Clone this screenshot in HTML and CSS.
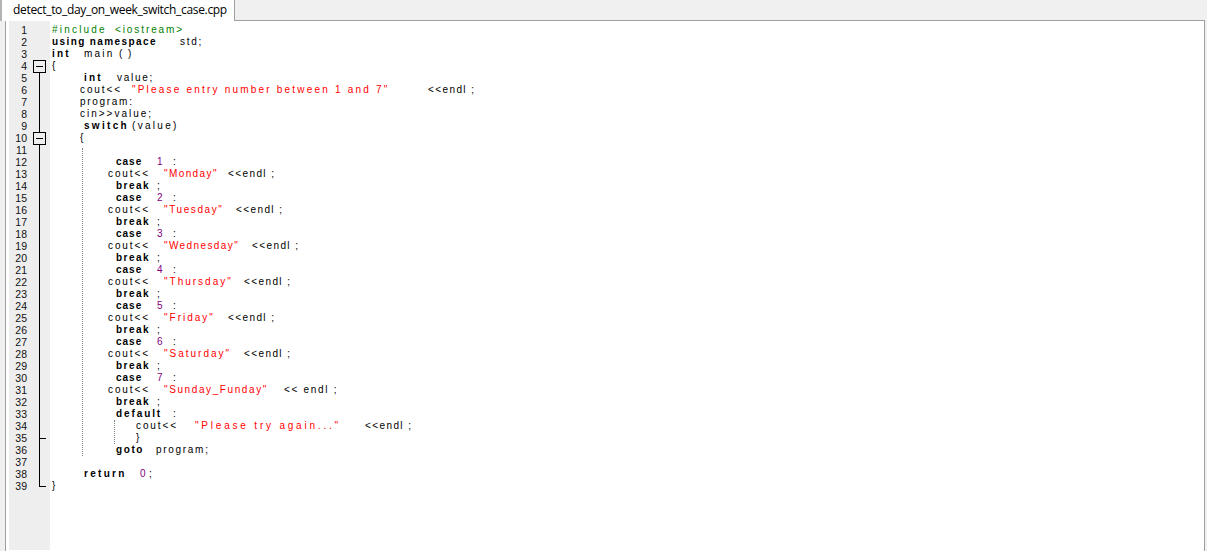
FILE: index.html
```html
<!DOCTYPE html>
<html lang="en">
<head>
<meta charset="utf-8">
<title>detect_to_day_on_week_switch_case.cpp</title>
<link rel="stylesheet" href="styles.css">
</head>
<body>
<div class="tabbar"><div class="tab">detect_to_day_on_week_switch_case.cpp</div></div>
<div class="editor">
<div class="gutter">
<div class="row"><span class="num">1</span><span class="fold"></span></div>
<div class="row"><span class="num">2</span><span class="fold"></span></div>
<div class="row"><span class="num">3</span><span class="fold"></span></div>
<div class="row"><span class="num">4</span><span class="fold box first"></span></div>
<div class="row"><span class="num">5</span><span class="fold line"></span></div>
<div class="row"><span class="num">6</span><span class="fold line"></span></div>
<div class="row"><span class="num">7</span><span class="fold line"></span></div>
<div class="row"><span class="num">8</span><span class="fold line"></span></div>
<div class="row"><span class="num">9</span><span class="fold line"></span></div>
<div class="row"><span class="num">10</span><span class="fold box"></span></div>
<div class="row"><span class="num">11</span><span class="fold line"></span></div>
<div class="row"><span class="num">12</span><span class="fold line"></span></div>
<div class="row"><span class="num">13</span><span class="fold line"></span></div>
<div class="row"><span class="num">14</span><span class="fold line"></span></div>
<div class="row"><span class="num">15</span><span class="fold line"></span></div>
<div class="row"><span class="num">16</span><span class="fold line"></span></div>
<div class="row"><span class="num">17</span><span class="fold line"></span></div>
<div class="row"><span class="num">18</span><span class="fold line"></span></div>
<div class="row"><span class="num">19</span><span class="fold line"></span></div>
<div class="row"><span class="num">20</span><span class="fold line"></span></div>
<div class="row"><span class="num">21</span><span class="fold line"></span></div>
<div class="row"><span class="num">22</span><span class="fold line"></span></div>
<div class="row"><span class="num">23</span><span class="fold line"></span></div>
<div class="row"><span class="num">24</span><span class="fold line"></span></div>
<div class="row"><span class="num">25</span><span class="fold line"></span></div>
<div class="row"><span class="num">26</span><span class="fold line"></span></div>
<div class="row"><span class="num">27</span><span class="fold line"></span></div>
<div class="row"><span class="num">28</span><span class="fold line"></span></div>
<div class="row"><span class="num">29</span><span class="fold line"></span></div>
<div class="row"><span class="num">30</span><span class="fold line"></span></div>
<div class="row"><span class="num">31</span><span class="fold line"></span></div>
<div class="row"><span class="num">32</span><span class="fold line"></span></div>
<div class="row"><span class="num">33</span><span class="fold line"></span></div>
<div class="row"><span class="num">34</span><span class="fold line"></span></div>
<div class="row"><span class="num">35</span><span class="fold line tick"></span></div>
<div class="row"><span class="num">36</span><span class="fold line"></span></div>
<div class="row"><span class="num">37</span><span class="fold line"></span></div>
<div class="row"><span class="num">38</span><span class="fold line"></span></div>
<div class="row"><span class="num">39</span><span class="fold end"></span></div>
</div>
<div class="code">
<div class="guide guide-outer"></div>
<div class="guide guide-inner"></div>
<div class="ln pre"><span class="t w63 ls22">#include </span><span>&lt;iostream&gt;</span></div>
<div class="ln"><b class="t w128 ls14">using namespace </b><span class="ls17">std;</span></div>
<div class="ln"><b class="t w32 ls22">int </b><span class="t w35 ls22">main </span><span class="t w9">(</span>)</div>
<div class="ln">{</div>
<div class="ln in-b"><b class="t w33 ls22">int </b><span class="ls17">value;</span></div>
<div class="ln in-a"><span class="t w52">cout&lt;&lt; </span><span class="t w296 str ls22">"Please entry number between 1 and 7" </span><span class="ls14">&lt;&lt;endl ;</span></div>
<div class="ln in-a ls17">program:</div>
<div class="ln in-a ls20">cin&gt;&gt;value;</div>
<div class="ln in-b"><b class="t w48 ls23">switch </b><span class="ls23">(value)</span></div>
<div class="ln in-a">{</div>
<div class="ln"></div>
<div class="ln in-k"><b class="t w41 ls10">case </b><span class="t w16 n">1 </span>:</div>
<div class="ln in-c"><span class="t w56">cout&lt;&lt; </span><span class="t w64 str ls14">"Monday" </span><span class="ls14">&lt;&lt;endl ;</span></div>
<div class="ln in-k"><b class="t w41 ls15">break </b>;</div>
<div class="ln in-k"><b class="t w41 ls10">case </b><span class="t w16 n">2 </span>:</div>
<div class="ln in-c"><span class="t w56">cout&lt;&lt; </span><span class="t w72 str ls16">"Tuesday" </span><span class="ls14">&lt;&lt;endl ;</span></div>
<div class="ln in-k"><b class="t w41 ls15">break </b>;</div>
<div class="ln in-k"><b class="t w41 ls10">case </b><span class="t w16 n">3 </span>:</div>
<div class="ln in-c"><span class="t w56">cout&lt;&lt; </span><span class="t w88 str ls14">"Wednesday" </span><span class="ls14">&lt;&lt;endl ;</span></div>
<div class="ln in-k"><b class="t w41 ls15">break </b>;</div>
<div class="ln in-k"><b class="t w41 ls10">case </b><span class="t w16 n">4 </span>:</div>
<div class="ln in-c"><span class="t w56">cout&lt;&lt; </span><span class="t w80 str ls20">"Thursday" </span><span class="ls14">&lt;&lt;endl ;</span></div>
<div class="ln in-k"><b class="t w41 ls15">break </b>;</div>
<div class="ln in-k"><b class="t w41 ls10">case </b><span class="t w16 n">5 </span>:</div>
<div class="ln in-c"><span class="t w56">cout&lt;&lt; </span><span class="t w64 str ls20">"Friday" </span><span class="ls14">&lt;&lt;endl ;</span></div>
<div class="ln in-k"><b class="t w41 ls15">break </b>;</div>
<div class="ln in-k"><b class="t w41 ls10">case </b><span class="t w16 n">6 </span>:</div>
<div class="ln in-c"><span class="t w56">cout&lt;&lt; </span><span class="t w80 str ls20">"Saturday" </span><span class="ls14">&lt;&lt;endl ;</span></div>
<div class="ln in-k"><b class="t w41 ls15">break </b>;</div>
<div class="ln in-k"><b class="t w41 ls10">case </b><span class="t w16 n">7 </span>:</div>
<div class="ln in-c"><span class="t w56">cout&lt;&lt; </span><span class="t w120 str ls16">"Sunday_Funday" </span><span class="ls17">&lt;&lt; endl ;</span></div>
<div class="ln in-k"><b class="t w41 ls15">break </b>;</div>
<div class="ln in-k"><b class="t w57">default </b>:</div>
<div class="ln in-d"><span class="t w59">cout&lt;&lt; </span><span class="t w170 str ls28">"Please try again..." </span><span class="ls14">&lt;&lt;endl ;</span></div>
<div class="ln in-d">}</div>
<div class="ln in-k"><b class="t w40 ls16">goto </b><span class="ls17">program;</span></div>
<div class="ln"></div>
<div class="ln in-b"><b class="t w56 ls23">return </b><span class="t w9 n">0</span>;</div>
<div class="ln">}</div>
</div>
</div>
</body>
</html>
```
FILE: styles.css
```css
html, body { margin: 0; padding: 0; height: 100%; overflow: hidden; background: #f0f0f0; }
body { display: flex; flex-direction: column; height: 551px; font-family: "Liberation Sans", Arial, sans-serif; }
.tabbar { height: 20px; flex: none; display: flex; }
.tab {
  width: 235px; height: 21px; box-sizing: border-box; background: #fff;
  border-right: 1px solid #a0a0a0; border-left: 2px solid #b4b4b4; position: relative; z-index: 1;
  font-family: "Open Sans", sans-serif; font-size: 12px; letter-spacing: -0.32px; line-height: 19px; padding-left: 11px; color: #000;
}
.editor {
  margin-left: 5px; margin-right: 2px; flex: 1; min-height: 0; display: flex;
  background: #fff; border: 1px solid #a0a0a0; border-bottom: 0; padding-left: 3px; padding-top: 3px;
}
.gutter { width: 41px; margin-top: -3px; padding-top: 3px; margin-bottom: 1px; background: #eeeeee; flex: none; color: #111; }
.row { height: 12px; display: flex; }
.num { width: 18px; text-align: right; font-size: 10.5px; line-height: 12px; }
.fold { width: 13px; margin-left: 6px; position: relative; display: block; }
.line::before, .box::before { content: ""; display: block; width: 1px; height: 100%; margin-left: 6px; background: #000; }
.first::before { background: transparent; }
.box::after {
  content: ""; position: absolute; left: 0; top: 0; width: 13px; height: 13px; z-index: 1;
  box-sizing: border-box; border: 1px solid #000;
  background: linear-gradient(#000, #000) center / 7px 1px no-repeat, #eee;
}
.tick::after { content: ""; position: absolute; left: 6px; top: 6px; width: 7px; height: 1px; background: #000; }
.end::before { content: ""; display: block; width: 6px; height: 6px; margin-left: 6px; border-left: 1px solid #000; border-bottom: 1px solid #000; }
.code { position: relative; flex: 1; padding-left: 2px; font-size: 10px; letter-spacing: 1.9px; color: #000; }
.ln { height: 12px; line-height: 12px; white-space: pre; }
.in-a { padding-left: 28px; }
.in-b { padding-left: 32px; }
.in-c { padding-left: 56px; }
.in-k { padding-left: 64px; }
.in-d { padding-left: 84px; }
.pre { color: #008000; }
.str { color: #ff0000; }
.n { color: #800080; }
.t { display: inline-block; overflow: visible; }
.w9 { width: 9px; } .w16 { width: 16px; } .w32 { width: 32px; } .w33 { width: 33px; }
.w35 { width: 35px; } .w40 { width: 40px; } .w41 { width: 41px; } .w48 { width: 48px; }
.w52 { width: 52px; } .w56 { width: 56px; } .w57 { width: 57px; } .w59 { width: 59px; }
.w63 { width: 63px; } .w64 { width: 64px; } .w72 { width: 72px; } .w80 { width: 80px; }
.w88 { width: 88px; } .w120 { width: 120px; } .w128 { width: 128px; } .w170 { width: 170px; }
.w296 { width: 296px; }
.ls10 { letter-spacing: 1px; } .ls14 { letter-spacing: 1.4px; } .ls15 { letter-spacing: 1.5px; }
.ls16 { letter-spacing: 1.6px; } .ls17 { letter-spacing: 1.7px; } .ls20 { letter-spacing: 2px; }
.ls22 { letter-spacing: 2.2px; } .ls23 { letter-spacing: 2.3px; } .ls28 { letter-spacing: 2.8px; }
.guide { position: absolute; width: 0; border-left: 1px dotted #808080; }
.guide-outer { left: 32px; top: 124px; height: 308px; }
.guide-inner { left: 64px; top: 396px; height: 24px; }
```
